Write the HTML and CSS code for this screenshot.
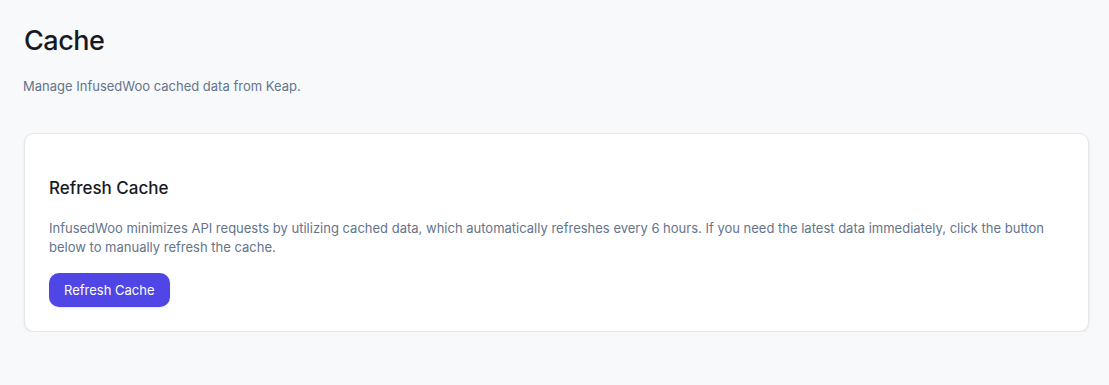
FILE: index.html
```html
<!DOCTYPE html>
<html lang="en">
<head>
  <meta charset="UTF-8">
  <title>Cache</title>
  <meta name="viewport" content="width=device-width, initial-scale=1" />
  <link rel="stylesheet" href="styles.css">
</head>
<body>

  <div class="page">
    <h1>Cache</h1>
    <p class="subtitle">Manage InfusedWoo cached data from Keap.</p>

    <!-- Refresh card -->
    <div class="card">
      <h2>Refresh Cache</h2>
      <p class="desc">InfusedWoo minimizes API requests by utilizing cached data, which automatically refreshes every 6 hours. If you need the latest data immediately, click the button below to manually refresh the cache.</p>
      <button class="btn-refresh">Refresh Cache</button>
    </div>
  </div>

</body>
</html>
```

FILE: styles.css
```css
body {
  margin: 0;
  font-family: Inter, "Noto Sans", sans-serif;
  background-color: #f8f9fb;
  color: #111827;
}

.page {
  padding: 24px 20px 0 24px;
}

h1 {
  margin: 0;
  font-size: 27px;
  font-weight: 500;
  line-height: 34px;
  letter-spacing: -0.5px;
  color: #171a21;
}

.subtitle {
  margin: 18px 0 0 -1px;
  font-size: 13px;
  line-height: 20px;
  color: #64748b;
}

.card {
  margin-top: 37px;
  background: #ffffff;
  border: 1px solid #e4e7ec;
  border-radius: 10px;
  box-shadow: 0 1px 3px rgba(16, 24, 40, 0.08);
  padding: 43px 24px 24px 24px;
}

h2 {
  margin: 0;
  font-size: 17px;
  font-weight: 500;
  line-height: 22px;
  color: #171a21;
}

.desc {
  margin: 20px 0 0 0;
  font-size: 13px;
  line-height: 19px;
  color: #64748b;
  max-width: 1000px;
}

.btn-refresh {
  margin-top: 16px;
  background-color: #4f46e5;
  color: #ffffff;
  border: none;
  border-radius: 10px;
  padding: 0 15px;
  height: 34px;
  font-family: inherit;
  font-size: 13px;
  cursor: pointer;
  box-shadow: 0 1px 2px rgba(16, 24, 40, 0.1);
}
```
